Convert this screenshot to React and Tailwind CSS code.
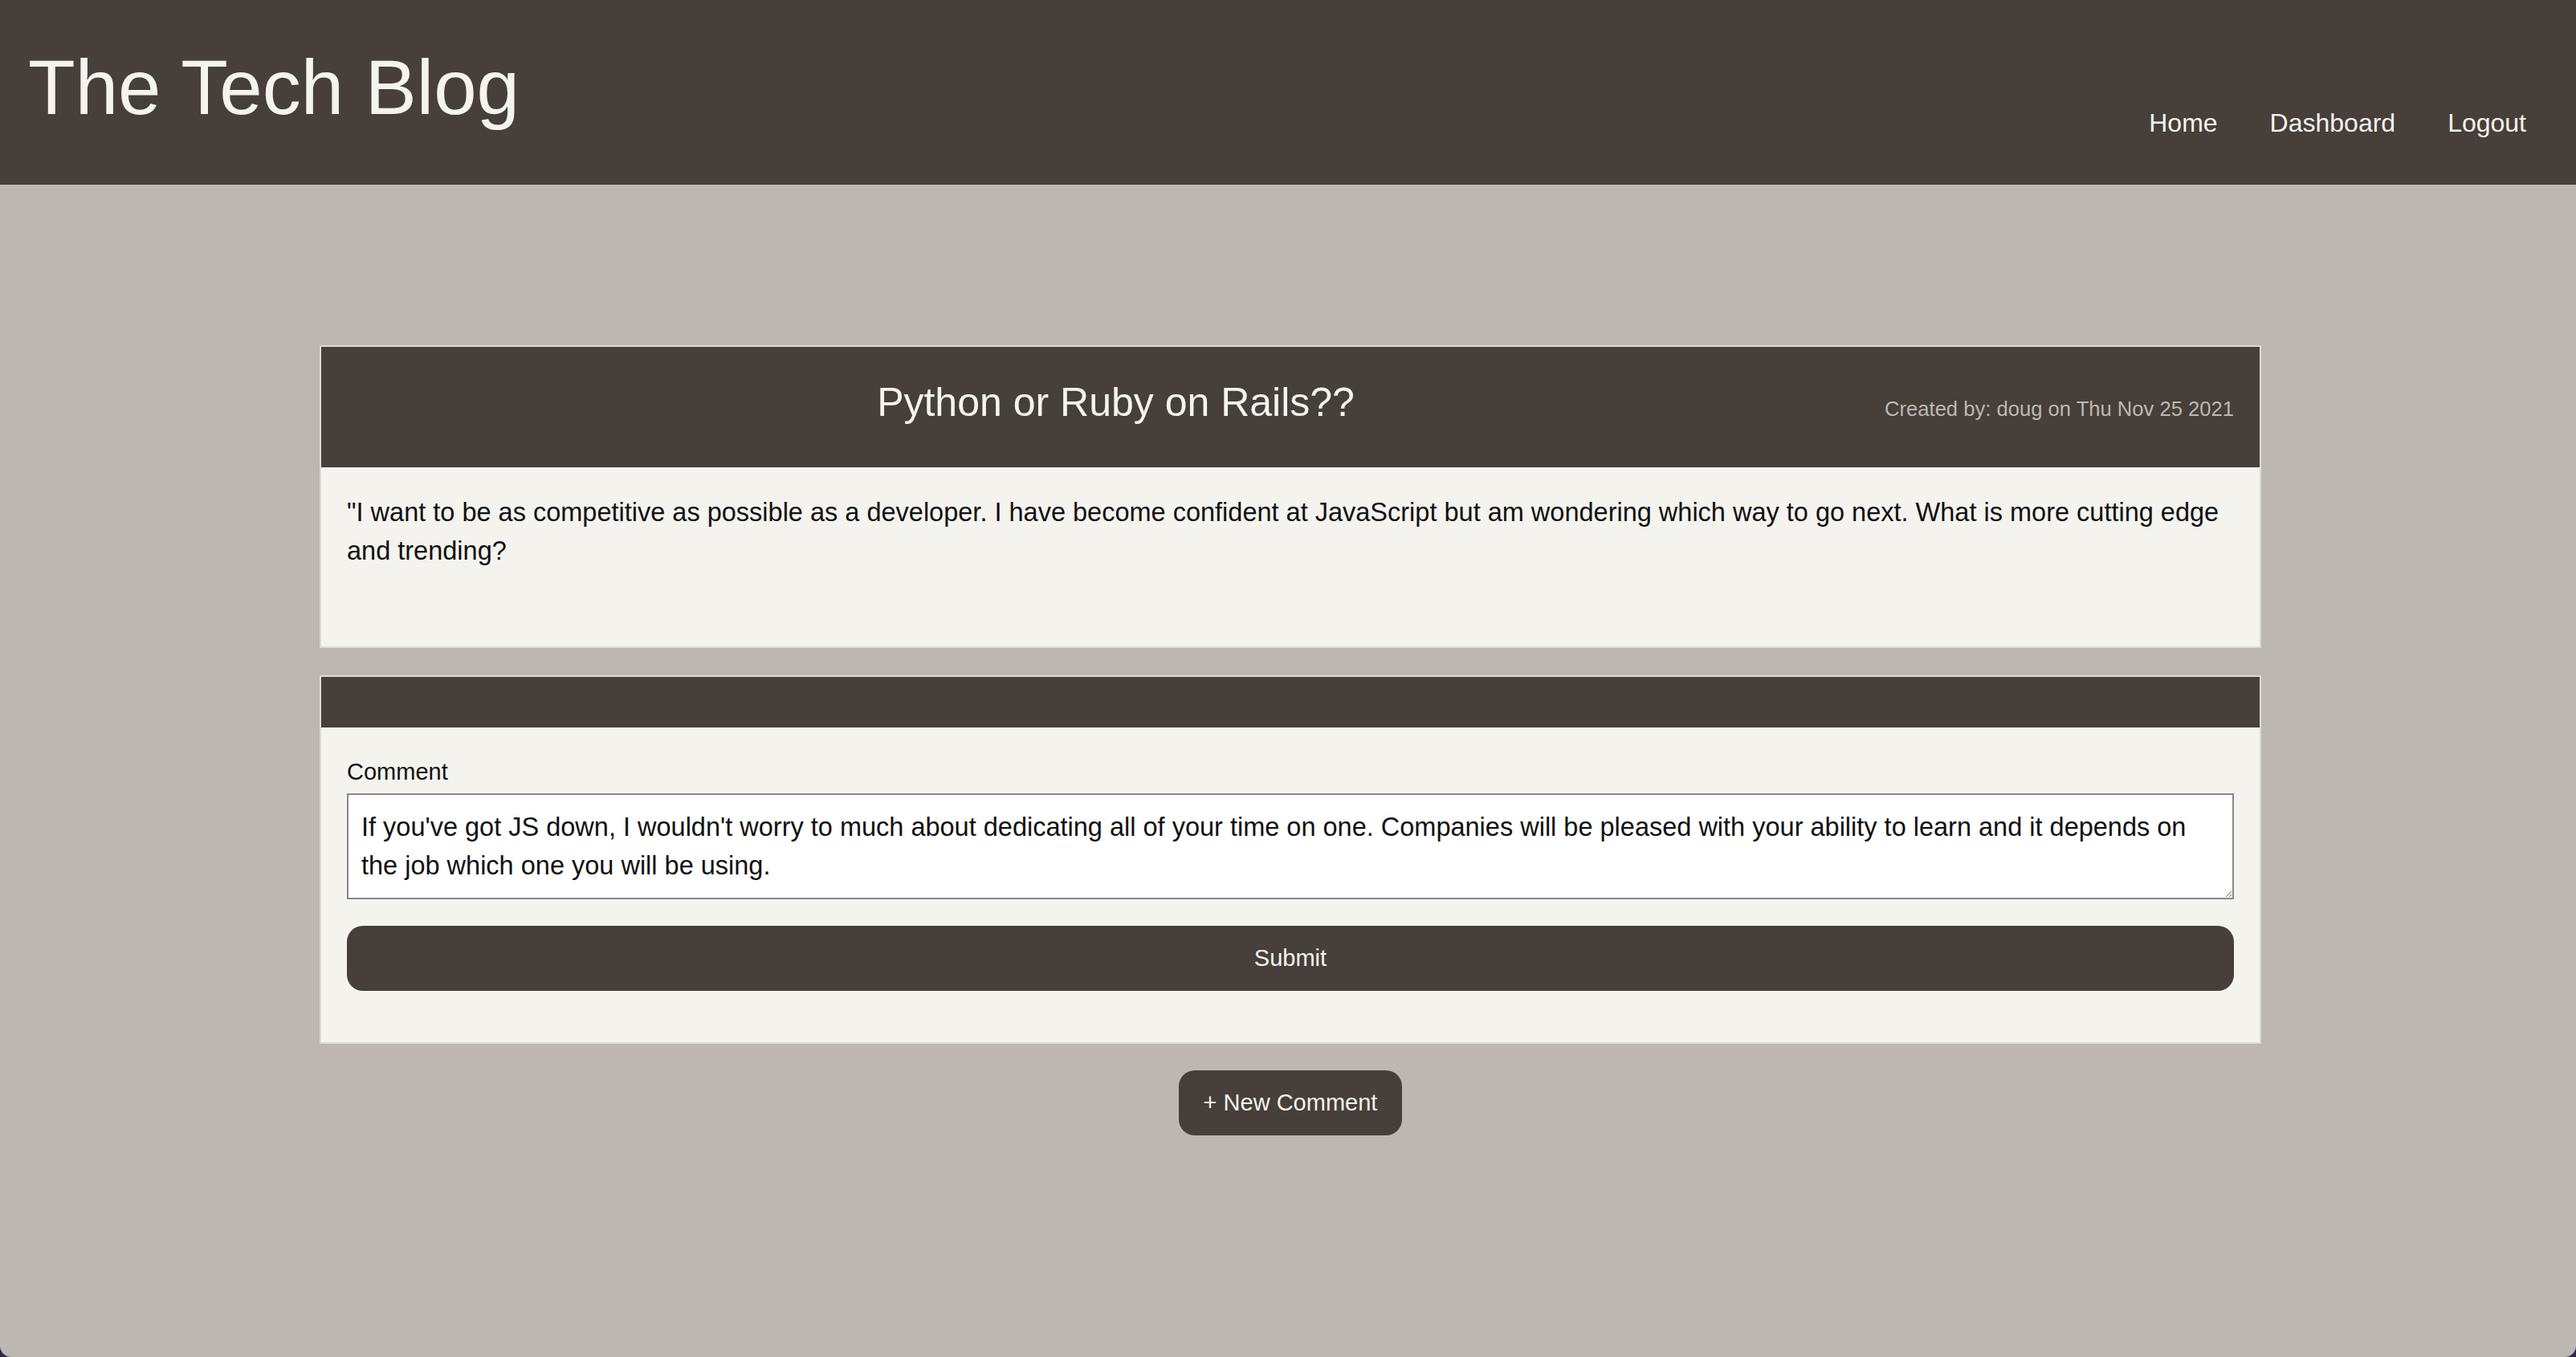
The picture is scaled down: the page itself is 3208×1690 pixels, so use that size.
const post = {
    title: 'Python or Ruby on Rails??',
    author: 'doug',
    date: 'Thu Nov 25 2021',
    body: '"I want to be as competitive as possible as a developer. I have become confident at JavaScript but am wondering which way to go next. What is more cutting edge and trending?',
};

const draft = "If you've got JS down, I wouldn't worry to much about dedicating all of your time on one. Companies will be pleased with your ability to learn and it depends on the job which one you will be using.";

const Header = () => (
    <header className="h-[230px] bg-[#463f3a] text-[#f4f3ee] flex justify-between items-start">
        <h1 className="ml-[35px] mt-[61px] text-[96px] leading-none font-normal">The Tech Blog</h1>
        <nav className="mt-[137px] mr-[62px] flex gap-[65px] text-[32px] leading-none">
            <a href="#">Home</a>
            <a href="#">Dashboard</a>
            <a href="#">Logout</a>
        </nav>
    </header>
);

const App = () => {
    return (
        <div className="min-h-screen bg-[#2a2b4a] font-['Liberation_Sans',Arial,sans-serif]">
            <div className="min-h-screen bg-[#bcb8b1] rounded-b-[14px] overflow-hidden">
                <Header />

                <main className="w-[2418px] ml-[398px] pt-[200px] pb-20 flex flex-col items-center">
                    {/* Post */}
                    <article className="w-full border-2 border-[#dcdad5] bg-[#f4f3ee]">
                        <div className="h-[150px] bg-[#463f3a] px-8 pt-[44px] flex items-baseline">
                            <h2 className="flex-1 text-center text-[50px] leading-none text-[#f4f3ee]">{post.title}</h2>
                            <p className="text-[25.6px] leading-none text-[#bcb8b1]">
                                Created by: {post.author} on {post.date}
                            </p>
                        </div>
                        <p className="px-8 pt-8 pb-[95px] text-[32.5px] leading-[48px] text-[#111]">{post.body}</p>
                    </article>

                    {/* Comment form */}
                    <form className="w-full mt-[34px] border-2 border-[#dcdad5] bg-[#f4f3ee]">
                        <div className="h-[63px] bg-[#463f3a]"></div>
                        <div className="px-8 pt-[41px] pb-16">
                            <label htmlFor="comment" className="block text-[29px] leading-none text-[#111]">Comment</label>
                            <textarea
                                id="comment"
                                rows={2}
                                defaultValue={draft}
                                className="block w-full mt-3 py-4 pl-4 pr-5 bg-white border-2 border-[#8a8a8a] shadow-inner text-[32.5px] leading-[48px] text-[#111] outline-none"
                            />
                            <button
                                type="button"
                                className="w-full h-[81px] mt-[33px] rounded-[20px] bg-[#463f3a] text-[#f4f3ee] text-[29px]"
                            >
                                Submit
                            </button>
                        </div>
                    </form>

                    <button
                        type="button"
                        className="mt-[33px] w-[278px] h-[81px] rounded-[20px] bg-[#463f3a] text-[#f4f3ee] text-[29px]"
                    >
                        + New Comment
                    </button>
                </main>
            </div>
        </div>
    );
};

export default App;
